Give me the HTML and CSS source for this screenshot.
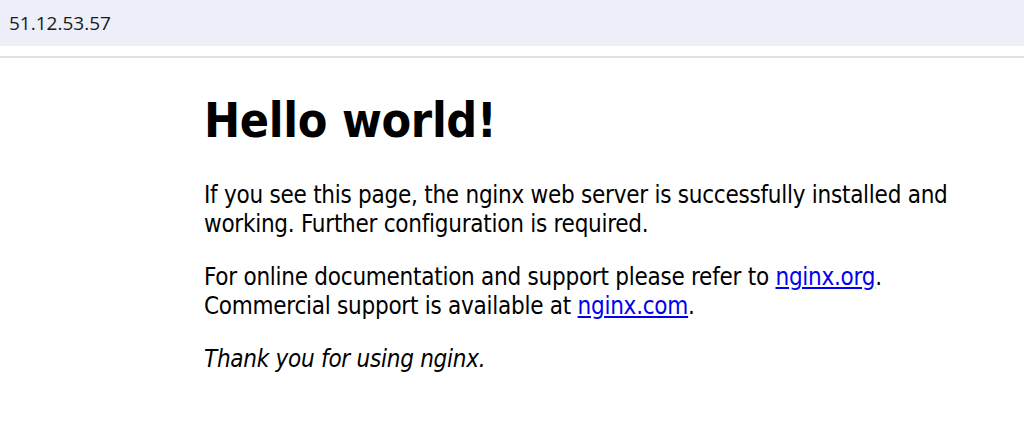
FILE: index.html
```html
<!DOCTYPE html>
<html>
<head>
<meta charset="utf-8">
<title>Welcome to nginx!</title>
<link rel="stylesheet" href="styles.css">
</head>
<body>
<div class="chrome">
  <div class="addr"><span class="addr-text">51.12.53.57</span></div>
</div>
<main class="page">
  <h1 class="title">Hello world!</h1>
  <p class="para">If you see this page, the nginx web server is successfully installed and working. Further configuration is required.</p>
  <p class="para">For online documentation and support please refer to <a class="link" href="#">nginx.org</a>.<br>
  Commercial support is available at <a class="link" href="#">nginx.com</a>.</p>
  <p class="para"><em>Thank you for using nginx.</em></p>
</main>
</body>
</html>
```
FILE: styles.css
```css
html, body {
  margin: 0;
  padding: 0;
  background: #ffffff;
}
.chrome {
  padding-bottom: 10px;
  border-bottom: 2px solid #e0e0e0;
}
.addr {
  height: 46px;
  background: #eceef8;
  display: flex;
  align-items: center;
  padding-left: 9px;
}
.addr-text {
  font-family: "Open Sans", "Noto Sans", sans-serif;
  font-size: 19px;
  color: #1a1a1a;
  margin-top: -1px;
}
.page {
  padding-left: 204px;
  width: 760px;
  font-family: "DejaVu Sans Condensed", "DejaVu Sans", sans-serif;
  font-size: 24px;
  line-height: 29px;
  letter-spacing: -0.26px;
  color: #000;
  padding-top: 1px;
}
.title {
  font-size: 48px;
  line-height: 58px;
  font-weight: bold;
  letter-spacing: -0.3px;
  margin: 32px 0;
}
.para {
  margin: 24px 0;
}
.link {
  color: #0000ee;
}
```
